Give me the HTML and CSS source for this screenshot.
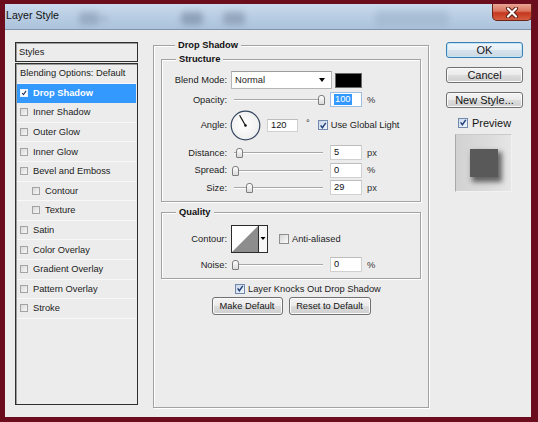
FILE: index.html
```html
<!DOCTYPE html>
<html>
<head>
<meta charset="utf-8">
<title>Layer Style</title>
<link rel="stylesheet" href="styles.css">
</head>
<body>
<div class="window">
  <div class="titlebar">
    <span class="title">Layer Style</span>
    <span class="glass g1"></span>
    <span class="glass g2"></span>
    <span class="glass g3"></span>
    <span class="glass g4"></span>
    <span class="glass g5"></span>
  </div>
  <div class="close">
    <svg width="14" height="11" viewBox="0 0 14 11"><path d="M3 1.5 L11 9.5 M11 1.5 L3 9.5" stroke="#5a1a10" stroke-width="4" stroke-linecap="round"/><path d="M3 1.5 L11 9.5 M11 1.5 L3 9.5" stroke="#ffffff" stroke-width="2.2" stroke-linecap="round"/></svg>
  </div>
  <div class="content">
    <div class="sidebar">
      <div class="styles-head">Styles</div>
      <div class="styles-list">
        <div class="srow">Blending Options: Default</div>
        <div class="srow selected"><span class="scb on"><svg width="8" height="8" viewBox="0 0 8 8"><path d="M1.5 4 L3.3 6.2 L6.8 1.2" fill="none" stroke="#1d3563" stroke-width="1.5"/></svg></span>Drop Shadow</div>
        <div class="srow"><span class="scb"></span>Inner Shadow</div>
        <div class="srow"><span class="scb"></span>Outer Glow</div>
        <div class="srow"><span class="scb"></span>Inner Glow</div>
        <div class="srow"><span class="scb"></span>Bevel and Emboss</div>
        <div class="srow sub"><span class="scb"></span>Contour</div>
        <div class="srow sub"><span class="scb"></span>Texture</div>
        <div class="srow"><span class="scb"></span>Satin</div>
        <div class="srow"><span class="scb"></span>Color Overlay</div>
        <div class="srow"><span class="scb"></span>Gradient Overlay</div>
        <div class="srow"><span class="scb"></span>Pattern Overlay</div>
        <div class="srow"><span class="scb"></span>Stroke</div>
      </div>
    </div>

    <div class="main">
      <fieldset class="group outer">
        <legend>Drop Shadow</legend>
        <fieldset class="group inner structure">
          <legend>Structure</legend>
          <div class="frow blend">
            <span class="lbl">Blend Mode:</span>
            <div class="select"><span>Normal</span><span class="arrow"></span></div>
            <span class="swatch"></span>
          </div>
          <div class="frow slrow first">
            <span class="lbl">Opacity:</span>
            <div class="slider"><span class="knob" style="left:87px"></span></div>
            <div class="num focus"><span class="hl">100</span></div>
            <span class="unit">%</span>
          </div>
          <div class="frow angle">
            <span class="lbl">Angle:</span>
            <svg class="dial" width="31" height="31" viewBox="0 0 31 31">
              <defs><radialGradient id="dg" cx="0.45" cy="0.45" r="0.6"><stop offset="0" stop-color="#ffffff"/><stop offset="0.8" stop-color="#f1f1f1"/><stop offset="1" stop-color="#dfe3ea"/></radialGradient></defs>
              <circle cx="15.5" cy="15.5" r="14.3" fill="url(#dg)" stroke="#34455f" stroke-width="1.2"/>
              <line x1="15.5" y1="15.5" x2="9.6" y2="5.3" stroke="#111" stroke-width="1.2"/>
              <circle cx="15.5" cy="15.5" r="1.3" fill="#111"/>
            </svg>
            <div class="num anum">120</div>
            <span class="deg">°</span>
            <span class="cb on"><svg width="9" height="9" viewBox="0 0 9 9"><path d="M1.8 4.4 L3.8 7 L7.6 1.5" fill="none" stroke="#1f3f7a" stroke-width="1.6"/></svg></span>
            <span class="cbtext">Use Global Light</span>
          </div>
          <div class="frow slrow dist">
            <span class="lbl">Distance:</span>
            <div class="slider"><span class="knob" style="left:5px"></span></div>
            <div class="num">5</div>
            <span class="unit">px</span>
          </div>
          <div class="frow slrow">
            <span class="lbl">Spread:</span>
            <div class="slider"><span class="knob" style="left:1px"></span></div>
            <div class="num">0</div>
            <span class="unit">%</span>
          </div>
          <div class="frow slrow">
            <span class="lbl">Size:</span>
            <div class="slider"><span class="knob" style="left:15px"></span></div>
            <div class="num">29</div>
            <span class="unit">px</span>
          </div>
        </fieldset>

        <fieldset class="group inner quality">
          <legend>Quality</legend>
          <div class="frow contour">
            <span class="lbl">Contour:</span>
            <svg class="contour-pick" width="37" height="28" viewBox="0 0 37 28">
              <rect x="0.5" y="0.5" width="36" height="27" fill="#ffffff" stroke="#2b2b2b"/>
              <path d="M1 27 L27 1 L27 27 Z" fill="#8d8d8d"/>
              <line x1="27.5" y1="0.5" x2="27.5" y2="27.5" stroke="#2b2b2b"/>
              <rect x="28" y="1" width="8" height="26" fill="#f7f7f7"/>
              <path d="M29.5 12 H34.5 L32 15 Z" fill="#000"/>
            </svg>
            <span class="cb aa"></span>
            <span class="cbtext">Anti-aliased</span>
          </div>
          <div class="frow slrow noise">
            <span class="lbl">Noise:</span>
            <div class="slider"><span class="knob" style="left:1px"></span></div>
            <div class="num">0</div>
            <span class="unit">%</span>
          </div>
        </fieldset>

        <div class="knock">
          <span class="cb on"><svg width="9" height="9" viewBox="0 0 9 9"><path d="M1.8 4.4 L3.8 7 L7.6 1.5" fill="none" stroke="#1f3f7a" stroke-width="1.6"/></svg></span>
          <span class="cbtext">Layer Knocks Out Drop Shadow</span>
        </div>
        <div class="defaults">
          <div class="btn small mk">Make Default</div>
          <div class="btn small rs">Reset to Default</div>
        </div>
      </fieldset>
    </div>

    <div class="actions">
      <div class="btn big ok">OK</div>
      <div class="btn big">Cancel</div>
      <div class="btn big">New Style...</div>
      <div class="prevrow">
        <span class="cb on"><svg width="9" height="9" viewBox="0 0 9 9"><path d="M1.8 4.4 L3.8 7 L7.6 1.5" fill="none" stroke="#1f3f7a" stroke-width="1.6"/></svg></span>
        <span class="prevtext">Preview</span>
      </div>
      <div class="preview"><span class="psq"></span></div>
    </div>
  </div>
</div>
</body>
</html>
```

FILE: styles.css
```css
* { box-sizing: border-box; }
html, body { margin: 0; padding: 0; }
body {
  width: 538px;
  height: 422px;
  overflow: hidden;
  background: #6b0d1d;
  font-family: "Liberation Sans", Arial, sans-serif;
  font-size: 9.3px;
  color: #1c1c1c;
}
.window {
  position: relative;
  height: 422px;
  padding: 4px 7px 5px 5px;
  display: flex;
  flex-direction: column;
}
.titlebar {
  position: relative;
  height: 26px;
  flex: none;
  overflow: hidden;
  background: linear-gradient(#c9daec, #b7cce2 55%, #abc3dc);
  border-bottom: 1px solid #7f93aa;
}
.title {
  position: relative;
  z-index: 2;
  display: block;
  padding: 5px 0 0 1px;
  line-height: 12px;
  font-size: 10.6px;
  color: #111;
}
.glass {
  position: absolute;
  top: 8px;
  height: 13px;
  border-radius: 4px;
  filter: blur(3px);
  background: #8b9fb7;
  opacity: 0.7;
}
.g1 { left: 74px; width: 20px; }
.g2 { left: 96px; width: 6px; top: 12px; height: 5px; }
.g3 { left: 176px; width: 22px; background: #7d90a8; }
.g4 { left: 218px; width: 22px; background: #8597ae; }
.g5 { left: 370px; width: 74px; top: 7px; height: 16px; background: #9fb4cb; opacity: 0.6; }
.close {
  position: absolute;
  top: 4px;
  right: 6px;
  width: 40px;
  height: 17px;
  border: 1px solid #6a2418;
  border-top: none;
  border-radius: 0 0 5px 5px;
  background: linear-gradient(#e9a594, #d9735d 45%, #c5371f 55%, #d45d3f);
  display: flex;
  align-items: center;
  justify-content: center;
}
.content {
  flex: 1;
  background: #ececec;
  display: flex;
  align-items: flex-start;
  padding: 10px 0 0 10px;
}

/* Sidebar */
.sidebar {
  width: 123px;
  margin-top: 2px;
  margin-right: 15px;
  flex: none;
}
.styles-head {
  height: 20px;
  border: 1px solid #2f2f2f;
  box-shadow: inset 1px 1px 0 #9a9a9a;
  padding-left: 3px;
  line-height: 18px;
  color: #1a1a1a;
}
.styles-list {
  margin-top: 1px;
  height: 342px;
  border: 1px solid #2f2f2f;
  box-shadow: inset 1px 1px 0 #9a9a9a;
  padding: 0 1px;
}
.srow {
  height: 19.6px;
  display: flex;
  align-items: center;
  padding-left: 3px;
  border-bottom: 1px solid #f8f8f8;
  color: #1c1c1c;
  white-space: nowrap;
}
.srow.sub { padding-left: 15px; }
.srow.selected {
  background: #3399ff;
  color: #ffffff;
  font-weight: bold;
  border-bottom-color: #3399ff;
}
.scb {
  width: 8px;
  height: 8px;
  margin-right: 5px;
  flex: none;
  border: 1px solid #a3a3a3;
  background: linear-gradient(135deg, #d9d9d9, #f7f7f7);
  display: flex;
  align-items: center;
  justify-content: center;
}
.scb.on {
  background: #ffffff;
  border-color: #e9f2ff;
}
.scb svg { display: block; }

/* Main */
.main {
  width: 276px;
  margin-right: 17px;
  flex: none;
}
.group {
  margin: 0;
  border: 1px solid #a2a2a2;
  box-shadow: 1px 1px 0 #ffffff, inset 1px 1px 0 #ffffff;
  min-width: 0;
}
.group legend {
  margin-left: 14px;
  padding: 0 3px;
  font-weight: bold;
  line-height: 11px;
  background: #ececec;
  color: #111;
}
.outer {
  height: 368px;
  padding: 0 7px;
}
.structure {
  margin-top: 3px;
  padding: 6px 0 6px 0;
}
.quality {
  margin-top: 5px;
  padding: 7px 0 6px 0;
}
.frow {
  display: flex;
  align-items: center;
}
.lbl {
  width: 65px;
  margin-right: 4px;
  text-align: right;
  flex: none;
  color: #1c1c1c;
}
.blend { height: 18px; }
.select {
  width: 101px;
  height: 18px;
  background: #ffffff;
  border: 1px solid #b5b5b5;
  border-top-color: #9c9c9c;
  display: flex;
  align-items: center;
  justify-content: space-between;
  padding: 0 6px 0 3px;
}
.arrow {
  width: 0;
  height: 0;
  border-left: 3.5px solid transparent;
  border-right: 3.5px solid transparent;
  border-top: 4px solid #000;
}
.swatch {
  width: 27px;
  height: 15px;
  margin-left: 3px;
  background: #000;
  border: 1px solid #6a6a6a;
}
.slrow { height: 15px; margin-top: 2.5px; }
.slrow.first { margin-top: 3px; }
.slrow.dist { margin-top: 5px; }
.slrow.noise { margin-top: 5px; }
.slider {
  position: relative;
  width: 95px;
  height: 15px;
  flex: none;
}
.slider::before {
  content: "";
  position: absolute;
  left: 3px;
  right: 3px;
  top: 7px;
  height: 1px;
  background: #a8a8a8;
  box-shadow: 0 1px 0 #ffffff;
}
.knob {
  position: absolute;
  top: 3px;
  width: 7px;
  height: 10px;
  border: 1px solid #7d7d7d;
  border-radius: 3px 3px 1px 1px;
  background: linear-gradient(#ffffff, #dadada);
}
.num {
  width: 32px;
  height: 15px;
  margin-left: 4px;
  flex: none;
  background: #ffffff;
  border: 1px solid #d0d0d0;
  border-top-color: #bdbdbd;
  padding-left: 3px;
  line-height: 13px;
  color: #111;
}
.num.focus { border-color: #9ebde0; }
.hl {
  background: #3399ff;
  color: #ffffff;
  display: inline-block;
  padding: 0 1px;
  line-height: 11px;
}
.unit { margin-left: 5px; color: #333; }
.angle { height: 30px; margin-top: 3px; }
.dial { margin-left: -1px; flex: none; }
.anum { width: 31px; height: 13px; margin-left: 6px; line-height: 11px; }
.deg { margin-left: 8px; margin-top: -5px; }
.cb {
  width: 10px;
  height: 10px;
  flex: none;
  border: 1px solid #8f8f8f;
  background: linear-gradient(135deg, #d6d6d6, #fbfbfb);
  display: flex;
  align-items: center;
  justify-content: center;
}
.cb.on {
  border-color: #7189ac;
  background: linear-gradient(135deg, #c8d6ea, #f3f7fc);
}
.cb svg { display: block; }
.angle .cb { margin-left: 8px; }
.cbtext { margin-left: 3px; white-space: nowrap; }
.contour { height: 27px; }
.contour-pick { flex: none; margin-top: 1px; }
.aa { margin-left: 11px; }
.knock {
  display: flex;
  align-items: center;
  height: 11px;
  margin-top: 4px;
  padding-left: 74px;
}
.knock .cbtext { margin-left: 3px; }
.defaults {
  display: flex;
  justify-content: center;
  gap: 6px;
  margin-top: 3px;
}
.btn {
  border: 1px solid #707070;
  border-radius: 3px;
  background: linear-gradient(#f4f4f4 0%, #ebebeb 48%, #dcdcdc 52%, #cfcfcf 100%);
  box-shadow: inset 0 0 0 1px #fbfbfb;
  display: flex;
  align-items: center;
  justify-content: center;
  color: #151515;
  white-space: nowrap;
}
.btn.small { height: 18px; }
.mk { width: 71px; }
.rs { width: 82px; }

/* Right column */
.actions {
  width: 77px;
  margin-top: 2px;
  flex: none;
}
.btn.big {
  height: 16px;
  font-size: 11px;
  margin-bottom: 9px;
}
.btn.big:nth-child(3) { margin-bottom: 0; }
.btn.ok {
  border-color: #3c7fb1;
  box-shadow: inset 0 0 0 1px #bfe3f7;
  background: linear-gradient(#f1f7fb 0%, #e6eff5 48%, #d6e3ec 52%, #cbd9e3 100%);
}
.prevrow {
  display: flex;
  align-items: center;
  height: 11px;
  margin-top: 9px;
  padding-left: 12px;
}
.prevtext {
  margin-left: 4px;
  font-size: 11px;
  color: #151515;
}
.preview {
  width: 57px;
  height: 58px;
  margin: 6px 0 0 9px;
  background: linear-gradient(90deg, #d2d2d2, #dcdcdc 60%, #e6e6e6);
  border-left: 1px solid #a9a9a9;
  border-top: 1px solid #cacaca;
  border-right: 1px solid #f2f2f2;
  border-bottom: 1px solid #f2f2f2;
  padding: 14px 0 0 14px;
}
.psq {
  display: block;
  width: 28px;
  height: 28px;
  background: #595959;
  box-shadow: 3px 4px 5px 1px rgba(0, 0, 0, 0.55);
}
```
